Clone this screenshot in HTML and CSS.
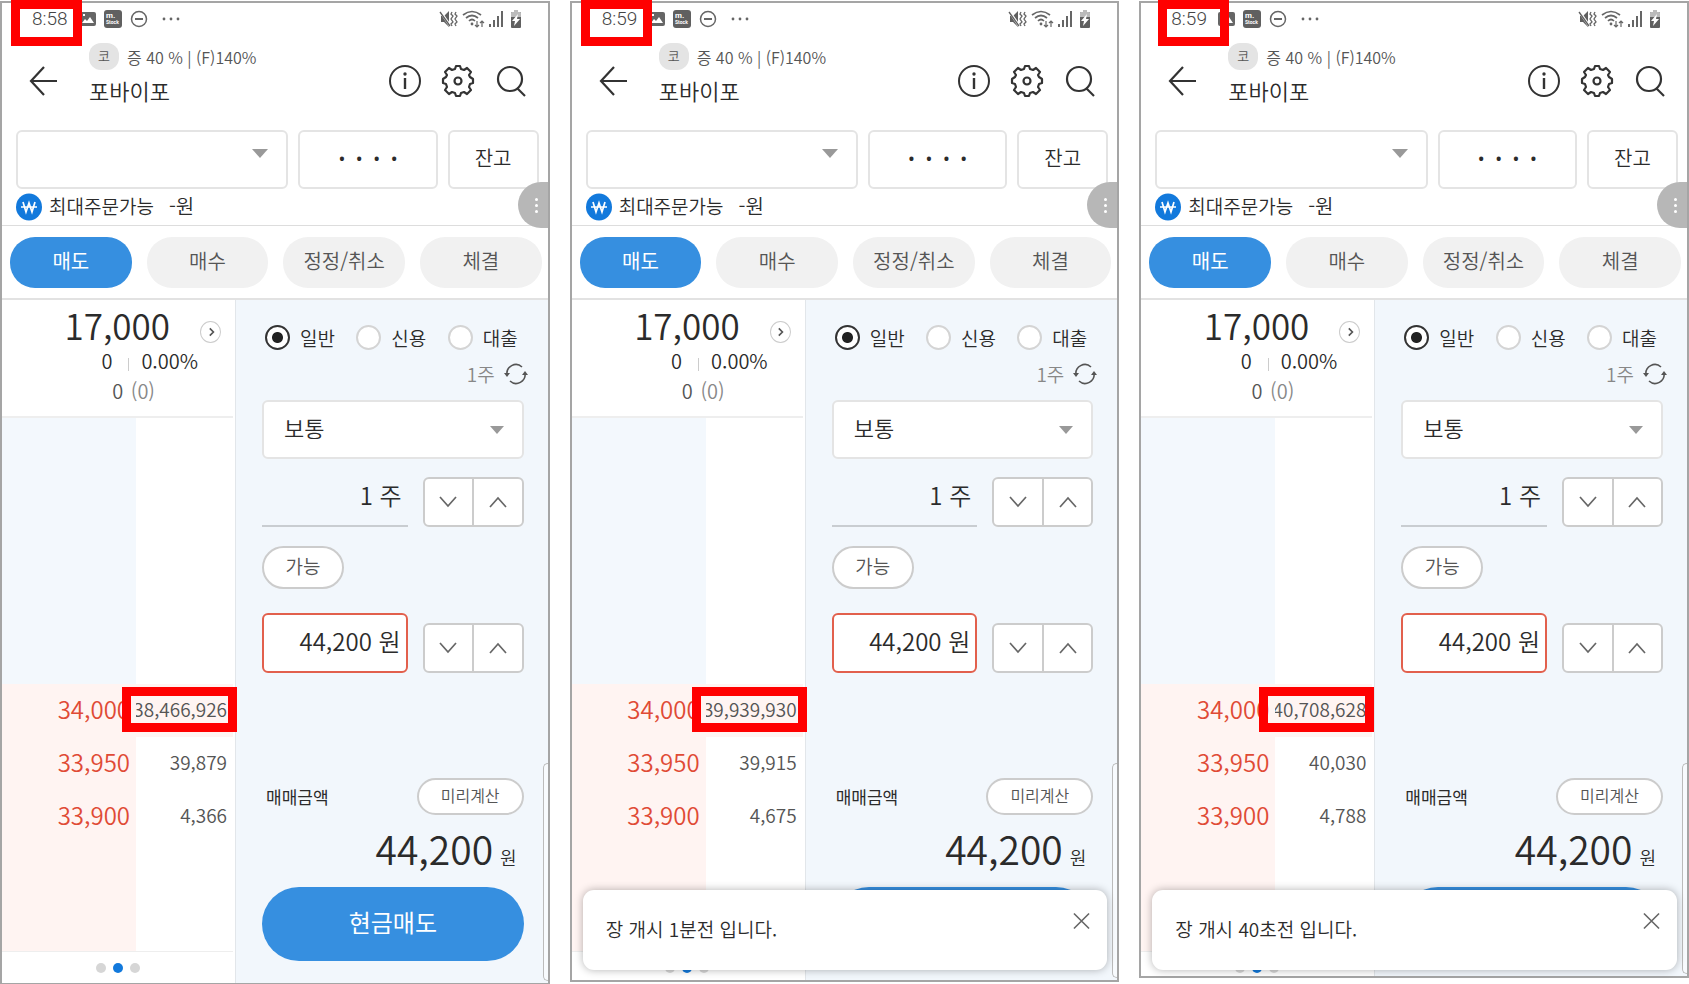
FILE: index.html
```html
<!DOCTYPE html>
<html lang="ko">
  <head>
    <meta charset="UTF-8" />
    <meta name="viewport" content="width=device-width, initial-scale=1.0" />
    <title>포바이포 주문</title>
    <link rel="stylesheet" href="styles.css">
  </head>
  <body>
    <svg class="sprite" aria-hidden="true">
      <symbol id="i-notify" viewBox="0 0 104 20">
        <path fill="#666" fill-rule="evenodd" d="M3 3h13q2 0 2 2v10q0 2-2 2H3q-2 0-2-2V5q0-2 2-2zm1 11h12l-4-6-3 4-2-2zM5 5v2h2V5z" />
        <rect x="26" y="1" width="18" height="18" rx="3" fill="#606060" />
        <text x="28" y="9" font-size="8" font-weight="700" fill="#fff">m.</text>
        <text x="28" y="15" font-size="5" font-weight="700" fill="#fff">Stock</text>
        <circle cx="61" cy="10" r="7.5" fill="none" stroke="#666" stroke-width="1.5" />
        <path d="M57 10h8" stroke="#666" stroke-width="2" />
        <g fill="#666"><circle cx="86" cy="10" r="1.4" /><circle cx="93" cy="10" r="1.4" /><circle cx="100" cy="10" r="1.4" /></g>
      </symbol>
      <symbol id="i-system" viewBox="0 0 82 20">
        <path fill="#606060" d="M2 7h3l5-5v16l-5-5H2z" />
        <path d="M1 2l11 16" stroke="#fff" stroke-width="2.6" />
        <path d="M1 3l10 14" stroke="#606060" stroke-width="1.3" />
        <path d="M13 3l-1 2 2 2-2 3 2 3-2 2 1 2M17 3l-1 2 2 2-2 3 2 3-2 2 1 2" fill="none" stroke="#666" stroke-width="1.3" />
        <path d="M24 6q9-7 18 0M27 9q6-5 12 0M30 12q3-3 6 0" fill="none" stroke="#666" stroke-width="1.7" />
        <circle cx="33" cy="15" r="1.4" fill="#666" />
        <path d="M38 12v6M36 16l2 2 2-2M43 18v-6M41 14l2-2 2 2" fill="none" stroke="#666" stroke-width="1.2" />
        <path d="M51 18v-3M55 18v-7M59 18V7M63 18V2" stroke="#666" stroke-width="2" />
        <path fill="#606060" fill-rule="evenodd" d="M73 3h2V1h4v2h2q1 0 1 1v14q0 1-1 1h-8q-1 0-1-1V4q0-1 1-1z" />
        <path fill="#bbb" d="M72 4q0-1 1-1h2V1h4v2h2q1 0 1 1v4H72z" />
        <path fill="#fff" d="M79 5l-6 7h3l-1 5 6-7h-3z" />
      </symbol>
      <symbol id="i-back" viewBox="0 0 30 32">
        <path d="M16 2L3 16l13 14M3 16h26" fill="none" stroke="#333" stroke-width="2.2" />
      </symbol>
      <symbol id="i-info" viewBox="0 0 34 34">
        <circle cx="17" cy="17" r="15" fill="none" stroke="#333" stroke-width="2" />
        <path d="M17 14v11" stroke="#333" stroke-width="2.4" />
        <circle cx="17" cy="10" r="1.7" fill="#333" />
      </symbol>
      <symbol id="i-gear" viewBox="0 0 34 34">
        <path d="M14 5l1-3h4l1 3 3 1 3-2 4 4-2 3 1 2 3 2v4l-3 1-1 3 2 3-4 4-3-2-3 1-1 3h-4l-1-3-3-1-3 2-4-4 2-3-1-3-3-1v-4l3-2 1-2-2-3 4-4 3 2z" fill="none" stroke="#333" stroke-width="2.2" stroke-linejoin="round" />
        <circle cx="17" cy="17" r="3.5" fill="none" stroke="#333" stroke-width="2.2" />
      </symbol>
      <symbol id="i-search" viewBox="0 0 34 34">
        <circle cx="16" cy="15" r="12" fill="none" stroke="#333" stroke-width="2.2" />
        <path d="M23 24l8 8" stroke="#333" stroke-width="2.2" />
      </symbol>
      <symbol id="i-won" viewBox="0 0 26 28">
        <ellipse cx="13" cy="14" rx="13" ry="13.5" fill="#1279dc" />
        <path d="M7 9l3 10 3-9 3 9 3-10M5 14h16" fill="none" stroke="#fff" stroke-width="1.7" />
      </symbol>
      <symbol id="i-right" viewBox="0 0 10 10">
        <path d="M4 2l3 3-3 3" fill="none" stroke="#555" stroke-width="1.4" />
      </symbol>
      <symbol id="i-down" viewBox="0 0 20 12">
        <path d="M2 1l8 9 8-9" fill="none" stroke="#666" stroke-width="1.7" />
      </symbol>
      <symbol id="i-up" viewBox="0 0 20 12">
        <path d="M2 11l8-9 8 9" fill="none" stroke="#666" stroke-width="1.7" />
      </symbol>
      <symbol id="i-refresh" viewBox="0 0 24 24">
        <path d="M3 13a9 9 0 0 1 15-8M21 11a9 9 0 0 1-15 8" fill="none" stroke="#555" stroke-width="1.6" />
        <path d="M0 11h6l-3 4zM24 13h-6l3-4z" fill="#555" />
      </symbol>
      <symbol id="i-close" viewBox="0 0 18 18">
        <path d="M1 1l16 16M17 1L1 17" stroke="#666" stroke-width="1.7" />
      </symbol>
    </svg>

    <main class="screens">
      <section class="phone">
        <div class="status">
          <span class="time">8:58</span>
          <svg class="notify"><use href="#i-notify" /></svg>
          <svg class="system"><use href="#i-system" /></svg>
        </div>
        <span class="mark mark-time"></span>
        <header class="header">
          <button class="icon-btn back" aria-label="뒤로"><svg><use href="#i-back" /></svg></button>
          <div class="title">
            <p class="margin-info"><span class="badge">코</span>증 40 % | (F)140%</p>
            <h1>포바이포</h1>
          </div>
          <button class="icon-btn" aria-label="정보"><svg><use href="#i-info" /></svg></button>
          <button class="icon-btn" aria-label="설정"><svg><use href="#i-gear" /></svg></button>
          <button class="icon-btn" aria-label="검색"><svg><use href="#i-search" /></svg></button>
        </header>
        <div class="account">
          <div class="select"><select aria-label="계좌"><option></option></select></div>
          <input class="box pin" type="text" aria-label="비밀번호" value="· · · ·" />
          <button class="box balance">잔고</button>
        </div>
        <div class="available"><svg><use href="#i-won" /></svg><span>최대주문가능</span><span class="amount">-원</span></div>
        <button class="handle" aria-label="더보기"><i></i><i></i><i></i></button>
        <nav class="tabs">
          <button class="tab active">매도</button>
          <button class="tab">매수</button>
          <button class="tab">정정/취소</button>
          <button class="tab">체결</button>
        </nav>
        <div class="trade">
          <div class="book">
            <div class="quote">
              <div class="price"><strong>17,000</strong><button class="more" aria-label="상세"><svg><use href="#i-right" /></svg></button></div>
              <p class="change"><span>0</span><i></i><span>0.00%</span></p>
              <p class="volume">0 <span>(0)</span></p>
            </div>
            <table>
              <tbody>
                <tr class="asks"><td></td><td></td></tr>
                <tr class="best"><td>34,000</td><td><div class="qty">38,466,926</div></td></tr>
                <tr><td>33,950</td><td><div class="qty">39,879</div></td></tr>
                <tr><td>33,900</td><td><div class="qty">4,366</div></td></tr>
                <tr class="rest"><td></td><td></td></tr>
              </tbody>
            </table>
            <span class="mark mark-qty"></span>
            <div class="pager"><i></i><i class="on"></i><i></i></div>
          </div>
          <form class="order">
            <div class="types">
              <label><input type="radio" name="type1" checked />일반</label>
              <label><input type="radio" name="type1" />신용</label>
              <label><input type="radio" name="type1" />대출</label>
            </div>
            <div class="unit">1주<button type="button" aria-label="새로고침"><svg><use href="#i-refresh" /></svg></button></div>
            <div class="select kind"><select aria-label="주문유형"><option>보통</option></select></div>
            <div class="field">
              <input class="line-input" type="text" aria-label="수량" value="1 주" />
              <div class="stepper">
                <button type="button" aria-label="수량 감소"><svg><use href="#i-down" /></svg></button>
                <button type="button" aria-label="수량 증가"><svg><use href="#i-up" /></svg></button>
              </div>
            </div>
            <button type="button" class="pill possible">가능</button>
            <div class="field">
              <input class="price-input" type="text" aria-label="가격" value="44,200 원" />
              <div class="stepper">
                <button type="button" aria-label="가격 감소"><svg><use href="#i-down" /></svg></button>
                <button type="button" aria-label="가격 증가"><svg><use href="#i-up" /></svg></button>
              </div>
            </div>
            <div class="summary"><span>매매금액</span><button type="button" class="pill preview">미리계산</button></div>
            <p class="total">44,200 <small>원</small></p>
            <button type="button" class="submit">현금매도</button>
          </form>
        </div>
        <span class="edge"></span>
      </section>

      <section class="phone second">
        <div class="status">
          <span class="time">8:59</span>
          <svg class="notify"><use href="#i-notify" /></svg>
          <svg class="system"><use href="#i-system" /></svg>
        </div>
        <span class="mark mark-time"></span>
        <header class="header">
          <button class="icon-btn back" aria-label="뒤로"><svg><use href="#i-back" /></svg></button>
          <div class="title">
            <p class="margin-info"><span class="badge">코</span>증 40 % | (F)140%</p>
            <h1>포바이포</h1>
          </div>
          <button class="icon-btn" aria-label="정보"><svg><use href="#i-info" /></svg></button>
          <button class="icon-btn" aria-label="설정"><svg><use href="#i-gear" /></svg></button>
          <button class="icon-btn" aria-label="검색"><svg><use href="#i-search" /></svg></button>
        </header>
        <div class="account">
          <div class="select"><select aria-label="계좌"><option></option></select></div>
          <input class="box pin" type="text" aria-label="비밀번호" value="· · · ·" />
          <button class="box balance">잔고</button>
        </div>
        <div class="available"><svg><use href="#i-won" /></svg><span>최대주문가능</span><span class="amount">-원</span></div>
        <button class="handle" aria-label="더보기"><i></i><i></i><i></i></button>
        <nav class="tabs">
          <button class="tab active">매도</button>
          <button class="tab">매수</button>
          <button class="tab">정정/취소</button>
          <button class="tab">체결</button>
        </nav>
        <div class="trade">
          <div class="book">
            <div class="quote">
              <div class="price"><strong>17,000</strong><button class="more" aria-label="상세"><svg><use href="#i-right" /></svg></button></div>
              <p class="change"><span>0</span><i></i><span>0.00%</span></p>
              <p class="volume">0 <span>(0)</span></p>
            </div>
            <table>
              <tbody>
                <tr class="asks"><td></td><td></td></tr>
                <tr class="best"><td>34,000</td><td><div class="qty">39,939,930</div></td></tr>
                <tr><td>33,950</td><td><div class="qty">39,915</div></td></tr>
                <tr><td>33,900</td><td><div class="qty">4,675</div></td></tr>
                <tr class="rest"><td></td><td></td></tr>
              </tbody>
            </table>
            <span class="mark mark-qty"></span>
            <div class="pager"><i></i><i class="on"></i><i></i></div>
          </div>
          <form class="order">
            <div class="types">
              <label><input type="radio" name="type2" checked />일반</label>
              <label><input type="radio" name="type2" />신용</label>
              <label><input type="radio" name="type2" />대출</label>
            </div>
            <div class="unit">1주<button type="button" aria-label="새로고침"><svg><use href="#i-refresh" /></svg></button></div>
            <div class="select kind"><select aria-label="주문유형"><option>보통</option></select></div>
            <div class="field">
              <input class="line-input" type="text" aria-label="수량" value="1 주" />
              <div class="stepper">
                <button type="button" aria-label="수량 감소"><svg><use href="#i-down" /></svg></button>
                <button type="button" aria-label="수량 증가"><svg><use href="#i-up" /></svg></button>
              </div>
            </div>
            <button type="button" class="pill possible">가능</button>
            <div class="field">
              <input class="price-input" type="text" aria-label="가격" value="44,200 원" />
              <div class="stepper">
                <button type="button" aria-label="가격 감소"><svg><use href="#i-down" /></svg></button>
                <button type="button" aria-label="가격 증가"><svg><use href="#i-up" /></svg></button>
              </div>
            </div>
            <div class="summary"><span>매매금액</span><button type="button" class="pill preview">미리계산</button></div>
            <p class="total">44,200 <small>원</small></p>
            <button type="button" class="submit" aria-label="현금매도"></button>
          </form>
        </div>
        <span class="edge"></span>
        <div class="toast" role="alert">
          <p>장 개시 1분전 입니다.</p>
          <button aria-label="닫기"><svg><use href="#i-close" /></svg></button>
        </div>
      </section>

      <section class="phone third">
        <div class="status">
          <span class="time">8:59</span>
          <svg class="notify"><use href="#i-notify" /></svg>
          <svg class="system"><use href="#i-system" /></svg>
        </div>
        <span class="mark mark-time"></span>
        <header class="header">
          <button class="icon-btn back" aria-label="뒤로"><svg><use href="#i-back" /></svg></button>
          <div class="title">
            <p class="margin-info"><span class="badge">코</span>증 40 % | (F)140%</p>
            <h1>포바이포</h1>
          </div>
          <button class="icon-btn" aria-label="정보"><svg><use href="#i-info" /></svg></button>
          <button class="icon-btn" aria-label="설정"><svg><use href="#i-gear" /></svg></button>
          <button class="icon-btn" aria-label="검색"><svg><use href="#i-search" /></svg></button>
        </header>
        <div class="account">
          <div class="select"><select aria-label="계좌"><option></option></select></div>
          <input class="box pin" type="text" aria-label="비밀번호" value="· · · ·" />
          <button class="box balance">잔고</button>
        </div>
        <div class="available"><svg><use href="#i-won" /></svg><span>최대주문가능</span><span class="amount">-원</span></div>
        <button class="handle" aria-label="더보기"><i></i><i></i><i></i></button>
        <nav class="tabs">
          <button class="tab active">매도</button>
          <button class="tab">매수</button>
          <button class="tab">정정/취소</button>
          <button class="tab">체결</button>
        </nav>
        <div class="trade">
          <div class="book">
            <div class="quote">
              <div class="price"><strong>17,000</strong><button class="more" aria-label="상세"><svg><use href="#i-right" /></svg></button></div>
              <p class="change"><span>0</span><i></i><span>0.00%</span></p>
              <p class="volume">0 <span>(0)</span></p>
            </div>
            <table>
              <tbody>
                <tr class="asks"><td></td><td></td></tr>
                <tr class="best"><td>34,000</td><td><div class="qty">40,708,628</div></td></tr>
                <tr><td>33,950</td><td><div class="qty">40,030</div></td></tr>
                <tr><td>33,900</td><td><div class="qty">4,788</div></td></tr>
                <tr class="rest"><td></td><td></td></tr>
              </tbody>
            </table>
            <span class="mark mark-qty"></span>
            <div class="pager"><i></i><i class="on"></i><i></i></div>
          </div>
          <form class="order">
            <div class="types">
              <label><input type="radio" name="type3" checked />일반</label>
              <label><input type="radio" name="type3" />신용</label>
              <label><input type="radio" name="type3" />대출</label>
            </div>
            <div class="unit">1주<button type="button" aria-label="새로고침"><svg><use href="#i-refresh" /></svg></button></div>
            <div class="select kind"><select aria-label="주문유형"><option>보통</option></select></div>
            <div class="field">
              <input class="line-input" type="text" aria-label="수량" value="1 주" />
              <div class="stepper">
                <button type="button" aria-label="수량 감소"><svg><use href="#i-down" /></svg></button>
                <button type="button" aria-label="수량 증가"><svg><use href="#i-up" /></svg></button>
              </div>
            </div>
            <button type="button" class="pill possible">가능</button>
            <div class="field">
              <input class="price-input" type="text" aria-label="가격" value="44,200 원" />
              <div class="stepper">
                <button type="button" aria-label="가격 감소"><svg><use href="#i-down" /></svg></button>
                <button type="button" aria-label="가격 증가"><svg><use href="#i-up" /></svg></button>
              </div>
            </div>
            <div class="summary"><span>매매금액</span><button type="button" class="pill preview">미리계산</button></div>
            <p class="total">44,200 <small>원</small></p>
            <button type="button" class="submit" aria-label="현금매도"></button>
          </form>
        </div>
        <span class="edge"></span>
        <div class="toast" role="alert">
          <p>장 개시 40초전 입니다.</p>
          <button aria-label="닫기"><svg><use href="#i-close" /></svg></button>
        </div>
      </section>
    </main>
  </body>
</html>
```

FILE: styles.css
```css
* {
  margin: 0;
  padding: 0;
  box-sizing: border-box;
}

body {
  font-family: "Noto Sans CJK KR", sans-serif;
  font-weight: 350;
  font-size: 20px;
  line-height: 24px;
  color: #2b2b2b;
  background: #fff;
}

button,
input,
select {
  font: inherit;
  color: inherit;
  background: none;
  border: none;
}

button {
  cursor: pointer;
}

svg {
  display: block;
}

.sprite {
  display: none;
}

.screens {
  display: grid;
  grid-template-columns: repeat(3, 1fr);
  gap: 20px;
  align-items: start;
  padding-top: 1px;
}

.phone {
  position: relative;
  min-width: 0;
  border: 2px solid #a5a5a5;
}

/* status bar */
.status {
  display: flex;
  align-items: center;
  height: 34px;
  padding: 0 27px 2px 30px;
  font-family: Roboto, sans-serif;
  font-weight: 300;
  font-size: 19px;
  color: #444;
}

.notify {
  width: 104px;
  height: 20px;
  margin-left: 10px;
}

.system {
  width: 82px;
  height: 20px;
  margin-left: auto;
}

/* red highlight frames */
.mark {
  position: absolute;
  border: 9px solid #f00;
}

.mark-time {
  top: -3px;
  left: 9px;
  width: 71px;
  height: 46px;
}

.third .mark-time {
  left: 17px;
}

.mark-qty {
  top: 387px;
  left: 120px;
  width: 115px;
  height: 45px;
}

.third .mark-qty {
  left: 118px;
}

/* header */
.header {
  display: flex;
  align-items: center;
  gap: 19px;
  height: 88px;
  margin-bottom: 5px;
  padding: 0 20px 0 26px;
}

.icon-btn svg {
  width: 34px;
  height: 34px;
}

.back svg {
  width: 30px;
  height: 32px;
}

.title {
  flex: 1;
  align-self: flex-start;
  padding: 6px 0 0 12px;
}

.margin-info {
  display: flex;
  align-items: center;
  gap: 8px;
  height: 27px;
  font-size: 16px;
  line-height: 22px;
  color: #555;
}

.badge {
  width: 30px;
  height: 27px;
  border-radius: 12px;
  background: #e4e4e4;
  font-size: 13px;
  line-height: 25px;
  text-align: center;
}

.title h1 {
  margin-top: 6px;
  font-size: 22px;
  font-weight: 350;
  line-height: 28px;
}

/* account row */
.account {
  display: grid;
  grid-template-columns: 272fr 139fr 91fr;
  gap: 10px;
  height: 59px;
  padding: 0 9px 0 14px;
}

.box,
.select select {
  border: 2px solid #e4e4e4;
  border-radius: 6px;
  background: #fff;
}

.select {
  position: relative;
}

.select select {
  width: 100%;
  height: 59px;
  appearance: none;
}

.select::after {
  content: "";
  position: absolute;
  top: 19px;
  right: 20px;
  border: 8px solid transparent;
  border-top: 9px solid #999;
  border-bottom: none;
  pointer-events: none;
}

.pin {
  min-width: 0;
  padding-bottom: 4px;
  font-family: "Noto Sans", sans-serif;
  font-weight: 400;
  font-size: 33px;
  text-align: center;
}

.balance {
  padding-bottom: 3px;
}

.available {
  display: flex;
  align-items: center;
  gap: 7px;
  height: 37px;
  padding: 0 14px;
  border-bottom: 1px solid #ddd;
  font-size: 19px;
}

.available span {
  padding-bottom: 3px;
}

.available svg {
  width: 26px;
  height: 28px;
}

.available .amount {
  margin-left: 8px;
  font-size: 20px;
}

.handle {
  position: absolute;
  top: 179px;
  right: 0;
  display: flex;
  flex-direction: column;
  align-items: center;
  justify-content: center;
  gap: 3px;
  width: 30px;
  height: 46px;
  padding-left: 7px;
  border-radius: 23px 0 0 23px;
  background: #b7b7b7;
}

.handle i {
  width: 3px;
  height: 3px;
  border-radius: 50%;
  background: #fff;
}

/* tabs */
.tabs {
  display: grid;
  grid-template-columns: repeat(4, 1fr);
  gap: 15px;
  padding: 11px 6px 10px 8px;
  border-bottom: 2px solid #e2e2e2;
}

.tab {
  height: 51px;
  padding-bottom: 3px;
  border-radius: 25px;
  background: #f1f1f1;
  color: #555;
}

.tab.active {
  background: #368fe0;
  color: #fff;
  font-weight: 400;
}

/* order book */
.trade {
  display: grid;
  grid-template-columns: 233px 1fr;
}

.book {
  position: relative;
}

.quote {
  height: 118px;
  margin-right: 2px;
  border-bottom: 2px solid #eee;
}

.price {
  display: flex;
  align-items: center;
  justify-content: flex-end;
  gap: 30px;
  height: 49px;
  padding-right: 12px;
}

.price strong {
  font-size: 35px;
  font-weight: 350;
}

.more {
  display: grid;
  place-items: center;
  width: 21px;
  height: 22px;
  margin-top: 14px;
  border: 1px solid #ccc;
  border-radius: 50%;
}

.more svg {
  width: 12px;
  height: 12px;
}

.change {
  display: flex;
  align-items: center;
  justify-content: flex-end;
  gap: 12px;
  padding-right: 35px;
}

.change i {
  width: 1px;
  height: 13px;
  margin: 6px 0 0 4px;
  background: #ccc;
}

.volume {
  padding: 6px 78px 0 0;
  text-align: right;
  color: #555;
}

.volume span {
  margin-left: 2px;
  color: #888;
}

table {
  width: 231px;
  table-layout: fixed;
  border-collapse: collapse;
  border-bottom: 1px solid #eee;
}

td {
  height: 53px;
  padding: 0 6px 4px 0;
  text-align: right;
}

td:first-child {
  width: 134px;
  background: #fff4f2;
  color: #e04a35;
  font-size: 24px;
}

td:last-child {
  font-size: 19px;
  color: #555;
}

.asks td {
  height: 266px;
}

.asks td:first-child {
  background: #f3f8fd;
}

.best td {
  background: #fff4f2;
}

.rest td {
  height: 108px;
}

.qty {
  display: flex;
  justify-content: flex-end;
  overflow: hidden;
  line-height: 30px;
}

.pager {
  display: flex;
  justify-content: center;
  gap: 7px;
  padding: 11px 2px 10px 0;
}

.second .pager {
  padding-bottom: 7px;
}

.third .pager {
  padding-bottom: 3px;
}

.pager i {
  width: 10px;
  height: 10px;
  border-radius: 50%;
  background: #d6d6d6;
}

.pager .on {
  background: #1279dc;
}

/* order form */
.order {
  min-width: 0;
  padding: 25px 24px 0 26px;
  border-left: 1px solid #e2e6ea;
  background: #f2f7fc;
}

.types {
  display: flex;
  justify-content: space-between;
  padding: 0 6px 0 3px;
}

.types label {
  display: flex;
  align-items: center;
  gap: 10px;
  height: 25px;
  font-size: 19px;
}

.types input {
  width: 25px;
  height: 25px;
  border: 2px solid #d4d4d4;
  border-radius: 50%;
  background: #fff;
  appearance: none;
}

.types input:checked {
  border-color: #333;
  background: radial-gradient(circle, #222 5px, #fff 6px);
}

.unit {
  display: flex;
  align-items: center;
  justify-content: flex-end;
  gap: 9px;
  height: 24px;
  margin: 12px -4px 14px 0;
  font-size: 19px;
  color: #888;
}

.unit svg {
  width: 24px;
  height: 24px;
}

.kind select {
  padding: 0 20px 5px;
  font-size: 22px;
}

.kind::after {
  top: 26px;
  border-width: 7px;
  border-top-width: 8px;
}

.field {
  display: flex;
  align-items: flex-end;
  gap: 15px;
}

.field input {
  flex: 1;
  min-width: 0;
  font-size: 24px;
  text-align: right;
}

.line-input {
  height: 49px;
  margin-top: 19px;
  padding: 0 6px 14px 0;
  border-bottom: 2px solid #c9cdd1;
}

.price-input {
  height: 60px;
  padding: 0 5px 6px 0;
  border: 2px solid #e2604d;
  border-radius: 6px;
  background: #fff;
}

.stepper {
  display: flex;
  width: 101px;
  height: 50px;
  border: 2px solid #ccc;
  border-radius: 6px;
  background: #fff;
}

.stepper button {
  display: grid;
  flex: 1;
  place-items: center;
}

.stepper button + button {
  border-left: 2px solid #ccc;
}

.stepper svg {
  width: 20px;
  height: 12px;
}

.pill {
  border: 2px solid #ccc;
  border-radius: 22px;
  background: #fff;
  color: #555;
}

.possible {
  display: block;
  width: 82px;
  height: 43px;
  margin: 19px 0 24px;
  padding-bottom: 3px;
  font-size: 19px;
}

.summary {
  display: flex;
  align-items: center;
  justify-content: space-between;
  margin-top: 105px;
  padding-left: 4px;
  font-size: 17px;
  font-weight: 400;
}

.preview {
  width: 107px;
  height: 37px;
  padding-bottom: 3px;
  font-size: 16px;
  font-weight: 350;
}

.total {
  display: flex;
  align-items: baseline;
  justify-content: flex-end;
  gap: 7px;
  height: 50px;
  margin: 10px 0 12px;
  padding-right: 7px;
  font-size: 39px;
  line-height: 46px;
}

.total small {
  font-size: 18px;
}

.submit {
  display: block;
  width: 100%;
  height: 74px;
  padding-bottom: 5px;
  border-radius: 37px;
  background: #368fe0;
  color: #fff;
  font-size: 24px;
  font-weight: 400;
}

/* side panel peeking in from the right */
.edge {
  position: absolute;
  top: 760px;
  right: 0;
  bottom: 2px;
  width: 5px;
  border: 1px solid #bbb;
  border-right: none;
  border-radius: 6px 0 0 6px;
  background: #f8fbfe;
}

.toast {
  position: absolute;
  right: 10px;
  bottom: 10px;
  left: 11px;
  display: flex;
  align-items: flex-start;
  justify-content: space-between;
  height: 80px;
  padding: 22px 17px 0 23px;
  border-radius: 11px;
  background: #fff;
  box-shadow: 0 0 8px rgba(0, 0, 0, 0.3);
}

.toast p {
  padding-top: 5px;
  font-size: 19px;
}

.toast svg {
  width: 17px;
  height: 18px;
}

.third .toast {
  bottom: 6px;
}
```
